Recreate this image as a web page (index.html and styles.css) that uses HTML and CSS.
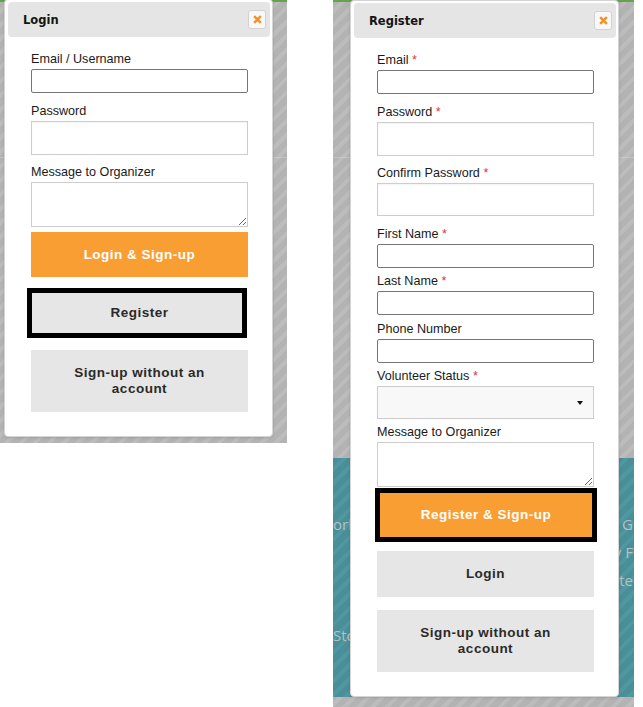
FILE: index.html
```html
<!DOCTYPE html>
<html lang="en">
<head>
<meta charset="utf-8">
<title>Login / Register</title>
<link rel="stylesheet" href="styles.css">
</head>
<body>
<div class="stage">
  <section class="shot shot-login">
    <div class="topbar"></div>
    <div class="rule"></div>
    <div class="dialog dialog-login">
      <header class="dialog-head">
        <span class="dialog-title">Login</span>
        <span class="close"><svg width="9" height="9" viewBox="0 0 9 9"><path d="M1.2 1.2L7.8 7.8M7.8 1.2L1.2 7.8" stroke="#f2932a" stroke-width="2.6"/></svg></span>
      </header>
      <form class="dialog-body">
        <div class="field sp-13">
          <label class="label">Email / Username</label>
          <input class="input" type="text">
        </div>
        <div class="field sp-9">
          <label class="label">Password</label>
          <input class="input input-soft" type="password">
        </div>
        <div class="field sp-8">
          <label class="label">Message to Organizer</label>
          <textarea class="input textarea"></textarea>
        </div>
        <button type="button" class="btn btn-primary sp-5">Login &amp; Sign-up</button>
        <button type="button" class="btn btn-focus focus-login sp-11">Register</button>
        <button type="button" class="btn btn-tall sp-12">Sign-up without an account</button>
      </form>
    </div>
  </section>

  <section class="shot shot-register">
    <div class="topbar"></div>
    <div class="rule"></div>
    <div class="teal">
      <div class="teal-left">
        <p class="teal-line first">orking</p>
        <p class="teal-line second">Stories</p>
      </div>
      <div class="teal-right">
        <p class="teal-lines">G<br>y F<br>nte</p>
      </div>
    </div>
    <div class="dialog dialog-register">
      <header class="dialog-head">
        <span class="dialog-title">Register</span>
        <span class="close"><svg width="9" height="9" viewBox="0 0 9 9"><path d="M1.2 1.2L7.8 7.8M7.8 1.2L1.2 7.8" stroke="#f2932a" stroke-width="2.6"/></svg></span>
      </header>
      <form class="dialog-body">
        <div class="field sp-13">
          <label class="label">Email <span class="req">*</span></label>
          <input class="input" type="email">
        </div>
        <div class="field sp-9">
          <label class="label">Password <span class="req">*</span></label>
          <input class="input input-soft" type="password">
        </div>
        <div class="field sp-8">
          <label class="label">Confirm Password <span class="req">*</span></label>
          <input class="input input-soft short" type="password">
        </div>
        <div class="field sp-9">
          <label class="label">First Name <span class="req">*</span></label>
          <input class="input" type="text">
        </div>
        <div class="field sp-4">
          <label class="label">Last Name <span class="req">*</span></label>
          <input class="input" type="text">
        </div>
        <div class="field sp-5">
          <label class="label">Phone Number</label>
          <input class="input" type="text">
        </div>
        <div class="field sp-4">
          <label class="label">Volunteer Status <span class="req">*</span></label>
          <div class="select"></div>
        </div>
        <div class="field sp-4">
          <label class="label">Message to Organizer</label>
          <textarea class="input textarea"></textarea>
        </div>
        <button type="button" class="btn btn-primary btn-focus focus-register sp-1">Register &amp; Sign-up</button>
        <button type="button" class="btn btn-46 sp-9">Login</button>
        <button type="button" class="btn btn-tall sp-13">Sign-up without an account</button>
      </form>
    </div>
  </section>
</div>
</body>
</html>
```
FILE: styles.css
```css
* { box-sizing: border-box; }

body {
  margin: 0;
  background: #fff;
  font-family: "Liberation Sans", Arial, sans-serif;
}

.stage {
  display: flex;
  align-items: flex-start;
  gap: 46px;
}

.shot {
  position: relative;
  overflow: hidden;
  background: repeating-linear-gradient(135deg, #b3b3b3 0 6px, #bcbcbc 6px 10px);
}
.shot-login { width: 287px; height: 443px; }
.shot-register { width: 301px; height: 707px; }

.topbar { height: 2px; background: #66a34b; }
.rule { margin-top: 155px; height: 1px; background: rgba(255, 255, 255, 0.22); }

.teal {
  margin-top: 300px;
  height: 239px;
  display: flex;
  background: repeating-linear-gradient(135deg, #4a8f98 0 6px, #5098a1 6px 10px);
  color: #b3c2c5;
  font: 15px "Open Sans", sans-serif;
}
.teal-left { flex: 0 0 240px; overflow: hidden; white-space: nowrap; }
.teal-right { flex: 1; overflow: hidden; white-space: nowrap; text-align: right; padding-right: 1px; }
.teal-line { margin: 0; line-height: 20px; }
.teal-line.first { margin-top: 56px; }
.teal-line.second { margin-top: 91px; }
.teal-lines { margin: 52px 0 0; line-height: 28px; }

.dialog {
  position: absolute;
  width: 269px;
  background: #fff;
  border: 1px solid #d4d4d4;
  border-radius: 4px;
  box-shadow: 0 1px 3px rgba(0, 0, 0, 0.12);
}
.dialog-login { left: 4px; top: -1px; }
.dialog-register { left: 17px; top: 0; }

.dialog-head {
  height: 35px;
  margin: 2px 2px 0 3px;
  padding: 0 4px 0 15px;
  background: #e5e5e5;
  border-radius: 4px;
  display: flex;
  align-items: center;
  justify-content: space-between;
}
.dialog-title {
  font: bold 11.5px "DejaVu Sans", Verdana, sans-serif;
  color: #141414;
}
.close {
  width: 18px;
  height: 19px;
  border: 1px solid #d2d2d2;
  border-radius: 3px;
  background: #f8f8f8;
  display: flex;
  align-items: center;
  justify-content: center;
}

.dialog-body {
  display: flex;
  flex-direction: column;
  padding: 0 24px 24px 26px;
}

.label {
  display: block;
  font-size: 12.6px;
  line-height: 16px;
  padding-top: 1px;
  margin-bottom: 2px;
  color: #1a1a1a;
}
.req { color: #e2333f; }

.input {
  display: block;
  width: 100%;
  height: 24px;
  margin: 0;
  padding: 0 4px;
  border: 1px solid #767676;
  border-radius: 2px;
  background: #fff;
  font: 12.6px "Liberation Sans", Arial, sans-serif;
}
.input-soft {
  height: 34px;
  border: 1px solid #cdcdcd;
  border-radius: 0;
  box-shadow: inset 0 1px 2px rgba(0, 0, 0, 0.05);
}
.input-soft.short { height: 33px; }
.textarea {
  height: 45px;
  border: 1px solid #cdcdcd;
  border-radius: 0;
  resize: vertical;
}

.select {
  position: relative;
  height: 33px;
  border: 1px solid #cdcdcd;
  background: #f8f8f8;
}
.select::after {
  content: "";
  position: absolute;
  right: 10px;
  top: 14px;
  border-left: 3px solid transparent;
  border-right: 3px solid transparent;
  border-top: 4px solid #111;
}

.btn {
  display: flex;
  align-items: center;
  justify-content: center;
  width: 100%;
  height: 45px;
  margin: 0;
  padding: 0 30px;
  border: 0;
  border-radius: 0;
  background: #e6e6e6;
  color: #2a2a2a;
  font: bold 13.5px "Liberation Sans", Arial, sans-serif;
  letter-spacing: 0.5px;
  line-height: 16px;
  text-align: center;
}
.btn-primary { background: #f99e33; color: #fff; }
.btn-46 { height: 46px; }
.btn-tall { height: 62px; }
.btn-focus { border: 5px solid #000; }
.focus-login { width: 220px; height: 50px; margin-left: -4px; padding-left: 35px; }
.focus-register { width: 222px; height: 54px; margin-left: -2px; }

.sp-1 { margin-top: 1px; }
.sp-4 { margin-top: 4px; }
.sp-5 { margin-top: 5px; }
.sp-8 { margin-top: 8px; }
.sp-9 { margin-top: 9px; }
.sp-11 { margin-top: 11px; }
.sp-12 { margin-top: 12px; }
.sp-13 { margin-top: 13px; }
```
